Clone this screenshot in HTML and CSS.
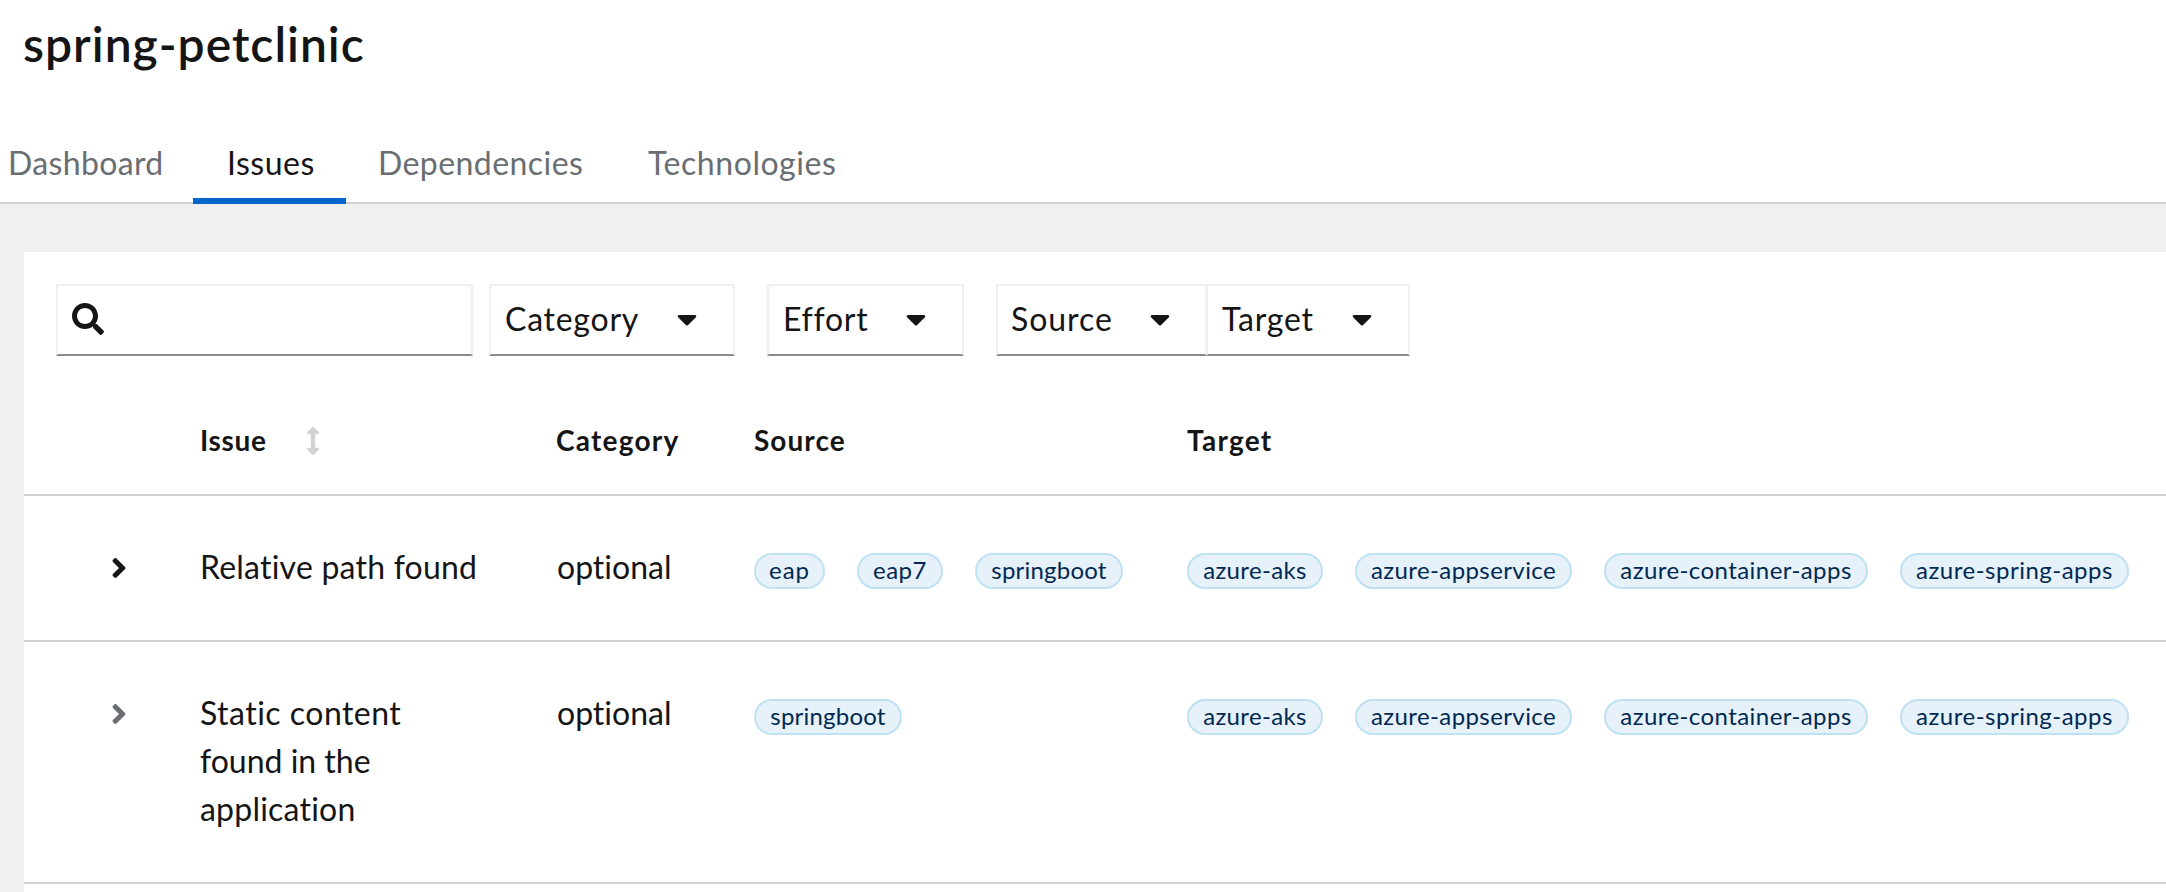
FILE: index.html
```html
<!DOCTYPE html>
<html lang="en">
<head>
<meta charset="utf-8">
<title>spring-petclinic</title>
<link rel="stylesheet" href="styles.css">
</head>
<body>
<svg class="defs" aria-hidden="true">
  <symbol id="caret" viewBox="0 0 320 512"><path d="M31.3 192h257.3c17.8 0 26.7 21.5 14.1 34.1L174.1 354.7c-7.8 7.8-20.5 7.8-28.3 0L17.2 226.1C4.6 213.5 13.5 192 31.3 192z"/></symbol>
  <symbol id="angle" viewBox="0 0 256 512"><path d="M224.3 273l-136 136c-9.4 9.4-24.6 9.4-33.9 0l-22.6-22.6c-9.4-9.4-9.4-24.6 0-33.9l96.4-96.4-96.4-96.4c-9.4-9.4-9.4-24.6 0-33.9L54.3 103c9.4-9.4 24.6-9.4 33.9 0l136 136c9.5 9.4 9.5 24.6.1 34z"/></symbol>
</svg>

<header class="header">
  <h1 class="title">spring-petclinic</h1>
  <nav class="tabs">
    <a class="tab tab-dashboard">Dashboard</a>
    <a class="tab tab-issues tab-current">Issues</a>
    <a class="tab tab-dependencies">Dependencies</a>
    <a class="tab tab-technologies">Technologies</a>
  </nav>
</header>

<main class="card">
  <div class="toolbar">
    <div class="search">
      <svg class="icon-search" viewBox="0 0 512 512"><path d="M505 442.7L405.3 343c-4.5-4.500-10.600-7-17-7H372c27.600-35.300 44-79.700 44-128C416 93.100 322.900 0 208 0S0 93.100 0 208s93.100 208 208 208c48.300 0 92.700-16.400 128-44v16.300c0 6.400 2.500 12.500 7 17l99.700 99.700c9.400 9.400 24.600 9.400 33.900 0l28.300-28.300c9.400-9.400 9.400-24.600.1-34zM208 336c-70.700 0-128-57.200-128-128 0-70.700 57.200-128 128-128 70.700 0 128 57.200 128 128 0 70.700-57.200 128-128 128z"/></svg>
    </div>
    <div class="select select-category"><span class="select-text">Category</span><svg class="icon-caret"><use href="#caret"/></svg></div>
    <div class="select select-effort"><span class="select-text">Effort</span><svg class="icon-caret"><use href="#caret"/></svg></div>
    <div class="select-pair">
      <div class="select select-source"><span class="select-text">Source</span><svg class="icon-caret"><use href="#caret"/></svg></div>
      <div class="select select-target"><span class="select-text">Target</span><svg class="icon-caret"><use href="#caret"/></svg></div>
    </div>
  </div>

  <div class="table">
    <div class="row row-head">
      <span></span>
      <span class="head-issue">Issue
        <svg class="icon-sort" viewBox="0 0 256 512"><path d="M214.059 377.941H168V134.059h46.059c21.382 0 32.090-25.851 16.971-40.971L144.971 7.029c-9.373-9.373-24.568-9.373-33.941 0L24.971 93.088c-15.119 15.119-4.411 40.971 16.971 40.971H88v243.882H41.941c-21.382 0-32.090 25.851-16.971 40.971l86.059 86.059c9.373 9.373 24.568 9.373 33.941 0l86.059-86.059c15.120-15.119 4.412-40.971-16.970-40.971z"/></svg>
      </span>
      <span class="head-category">Category</span>
      <span>Source</span>
      <span class="head-target">Target</span>
    </div>

    <div class="row">
      <svg class="icon-angle"><use href="#angle"/></svg>
      <span class="issue">Relative path found</span>
      <span class="category">optional</span>
      <div class="chips">
        <span class="chip chip-eap">eap</span>
        <span class="chip chip-eap7">eap7</span>
        <span class="chip chip-springboot">springboot</span>
      </div>
      <div class="chips">
        <span class="chip chip-aks">azure-aks</span>
        <span class="chip chip-appservice">azure-appservice</span>
        <span class="chip chip-container">azure-container-apps</span>
        <span class="chip chip-spring">azure-spring-apps</span>
      </div>
    </div>

    <div class="row">
      <svg class="icon-angle icon-muted"><use href="#angle"/></svg>
      <span class="issue"><span class="line-first">Static content</span><br><span class="line-mid">found in the</span><br>application</span>
      <span class="category">optional</span>
      <div class="chips">
        <span class="chip chip-springboot">springboot</span>
      </div>
      <div class="chips">
        <span class="chip chip-aks">azure-aks</span>
        <span class="chip chip-appservice">azure-appservice</span>
        <span class="chip chip-container">azure-container-apps</span>
        <span class="chip chip-spring">azure-spring-apps</span>
      </div>
    </div>
  </div>
</main>
</body>
</html>
```

FILE: styles.css
```css
* { box-sizing: border-box; }

body {
  margin: 0;
  height: 892px;
  overflow: hidden;
  display: flex;
  flex-direction: column;
  background: #f0f0f0;
  color: #151515;
  font: 32px/48px Lato, "Liberation Sans", sans-serif;
  font-variant-ligatures: none;
}

svg { display: block; fill: currentColor; }
.defs { display: none; }

.header {
  height: 204px;
  flex: none;
  display: flex;
  flex-direction: column;
  justify-content: space-between;
  padding-top: 14px;
  background: #fff;
  border-bottom: 2px solid #d2d2d2;
}

.title {
  margin: 0;
  padding-left: 23px;
  font-size: 48px;
  line-height: 60px;
  font-weight: 600;
  letter-spacing: 1px;
}

.tabs { display: flex; height: 80px; margin-bottom: -2px; }

.tab {
  flex: none;
  height: 80px;
  padding: 15px 0 17px 32px;
  color: #6a6e73;
  white-space: nowrap;
}
.tab-dashboard { width: 193px; padding-left: 8px; letter-spacing: 0.35px; }
.tab-issues { width: 153px; padding-left: 34px; letter-spacing: 0.5px; }
.tab-dependencies { width: 270px; letter-spacing: 0.43px; }
.tab-technologies { letter-spacing: 0.56px; }
.tab-current { padding-bottom: 11px; color: #151515; border-bottom: 6px solid #06c; }

.card {
  flex: 1;
  margin: 48px 0 0 24px;
  padding-top: 32px;
  background: #fff;
}

.toolbar { display: flex; padding-left: 32px; }

.search, .select {
  flex: none;
  height: 72px;
  display: flex;
  border: 2px solid #f0f0f0;
  border-bottom-color: #8a8d90;
}
.search { width: 417px; margin-right: 16px; padding: 17px 14px; }
.select { padding: 9px 14px; justify-content: space-between; }
.select-pair { display: flex; }
.select-category { width: 246px; margin-right: 32px; letter-spacing: 0.75px; }
.select-effort { width: 197px; margin-right: 32px; letter-spacing: 0.73px; }
.select-source { width: 211px; padding-left: 13px; letter-spacing: 0.95px; }
.select-target { width: 204px; margin-left: -1px; letter-spacing: 0.8px; }

.icon-search { width: 32px; height: 32px; }
.icon-caret { width: 20px; height: 32px; margin: 8px 22px 0 0; }
.select-source .icon-caret { margin-right: 21px; }

.table { margin-top: 56px; }

.row {
  display: grid;
  grid-template-columns: 176px 356px 198px 433px 1fr;
  align-items: start;
  padding: 47px 0 49px;
  border-bottom: 2px solid #d2d2d2;
}

.row-head {
  height: 84px;
  padding: 6px 0 0;
  font-size: 28px;
  line-height: 44px;
  font-weight: 700;
  letter-spacing: 1.05px;
}
.head-issue { display: flex; align-items: center; gap: 39px; letter-spacing: 0.66px; }
.head-category { letter-spacing: 1.24px; }
.head-target { letter-spacing: 1.25px; }
.icon-sort { width: 14px; height: 28px; margin-top: 2px; color: #d2d2d2; }

.icon-angle { width: 16px; height: 32px; margin: 9px 0 0 87px; }
.icon-muted { color: #6a6e73; }
.issue { letter-spacing: 0.22px; }
.category { padding-left: 1px; }
.line-first { letter-spacing: 0.48px; }
.line-mid { letter-spacing: 0; }

.chips { display: flex; gap: 32px; padding-top: 10px; }

.chip {
  height: 36px;
  border: 2px solid #bee1f4;
  border-radius: 18px;
  background: #e7f1fa;
  color: #002952;
  font-size: 24px;
  line-height: 30px;
  text-align: center;
  white-space: nowrap;
}
.chip-eap { width: 71px; letter-spacing: 0.95px; }
.chip-eap7 { width: 86px; letter-spacing: 0.55px; }
.chip-springboot { width: 148px; letter-spacing: 0.21px; }
.chip-aks { width: 136px; letter-spacing: 0.36px; }
.chip-appservice { width: 217px; letter-spacing: 0.4px; }
.chip-container { width: 264px; letter-spacing: 0.43px; }
.chip-spring { width: 229px; letter-spacing: 0.5px; }
```
